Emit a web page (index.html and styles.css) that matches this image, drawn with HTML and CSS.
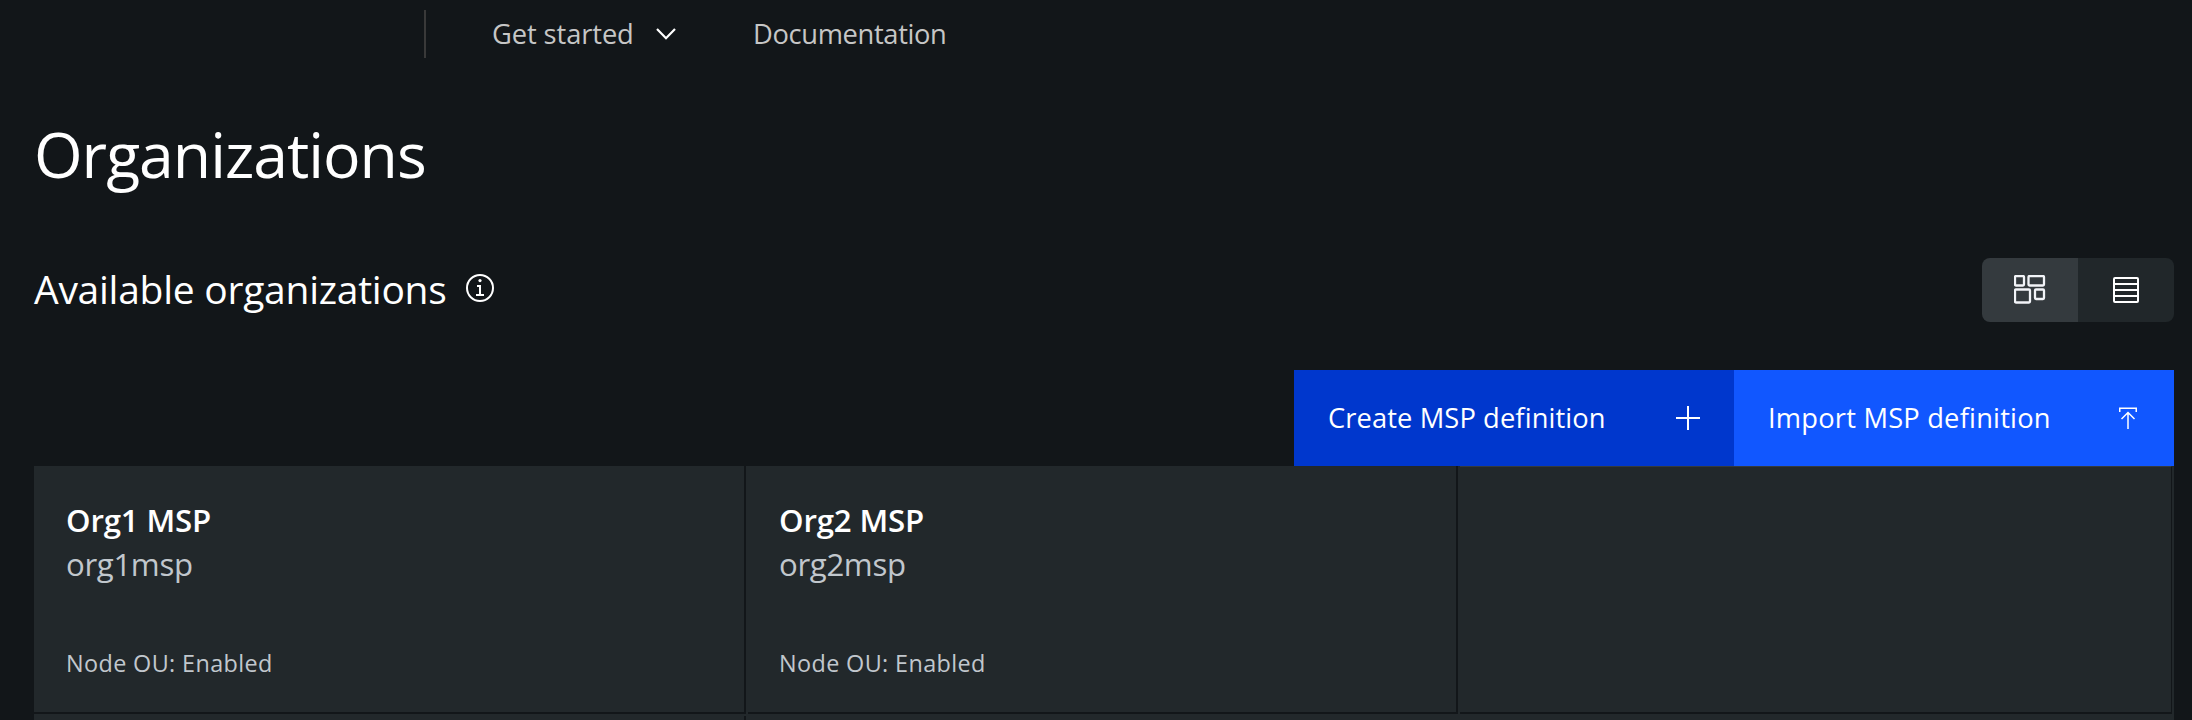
FILE: index.html
```html
<!DOCTYPE html>
<html lang="en">
<head>
<meta charset="utf-8">
<title>Organizations</title>
<link rel="stylesheet" href="styles.css">
</head>
<body>
<header class="topbar">
  <nav class="nav">
    <a class="nav-link started">Get started
      <svg class="chevron" width="20" height="12" viewBox="0 0 20 12"><path d="M1 1l9 9.2L19 1" fill="none" stroke="#fff" stroke-width="2.2"/></svg>
    </a>
    <a class="nav-link docs">Documentation</a>
  </nav>
</header>
<main class="page">
  <h1 class="title">Organizations</h1>
  <section class="heading-row">
    <h2 class="subtitle">Available organizations</h2>
    <svg class="info" width="28" height="28" viewBox="0 0 28 28"><circle cx="14" cy="14" r="13" fill="none" stroke="#fff" stroke-width="2"/><circle cx="14" cy="6.6" r="1.6" fill="#fff"/><path d="M11 12h3v9M10 21h8" fill="none" stroke="#fff" stroke-width="2"/></svg>
    <div class="toggle">
      <button class="toggle-item active" aria-label="Grid view">
        <svg width="32" height="30" viewBox="0 0 32 30" fill="none" stroke="#f2f4f8" stroke-width="2.3"><rect x="1" y="1" width="9" height="9.5" rx="1"/><rect x="14.5" y="1" width="15.5" height="9.5" rx="1"/><rect x="1" y="14.5" width="15" height="13" rx="1"/><rect x="21" y="14.5" width="9" height="9.5" rx="1"/></svg>
      </button>
      <button class="toggle-item" aria-label="List view">
        <svg width="26" height="26" viewBox="0 0 26 26" fill="none" stroke="#fff" stroke-width="2"><rect x="1" y="1" width="24" height="24" rx="1"/><path d="M1 7h24M1 13h24M1 19h24"/></svg>
      </button>
    </div>
  </section>
  <div class="actions">
    <button class="btn create"><span>Create MSP definition</span>
      <svg width="24" height="24" viewBox="0 0 24 24"><path d="M12 0v24M0 12h24" stroke="#fff" stroke-width="2"/></svg>
    </button>
    <button class="btn import"><span>Import MSP definition</span>
      <svg width="24" height="24" viewBox="0 0 24 24" fill="none" stroke="#fff" stroke-width="1.5"><path d="M3.75 6V2.25h16.5V6M12 23V6.5M5.5 13L12 6.5l6.5 6.5"/></svg>
    </button>
  </div>
  <div class="tiles">
    <article class="tile">
      <h3 class="name">Org1 MSP</h3>
      <p class="ident">org1msp</p>
      <p class="status">Node OU: Enabled</p>
    </article>
    <article class="tile">
      <h3 class="name">Org2 MSP</h3>
      <p class="ident">org2msp</p>
      <p class="status">Node OU: Enabled</p>
    </article>
    <article class="tile blank"></article>
    <div class="next-row"></div>
  </div>
</main>
</body>
</html>
```
FILE: styles.css
```css
* { box-sizing: border-box; margin: 0; padding: 0; }
body {
  height: 720px;
  overflow: hidden;
  background: #121619;
  color: #fff;
  font-family: "Open Sans", "Noto Sans", sans-serif;
}
button { border: 0; color: inherit; font: inherit; }
svg { display: block; flex: none; }

.topbar { height: 67px; padding: 10px 0 0 424px; }
.nav {
  display: flex;
  align-items: center;
  height: 48px;
  border-left: 2px solid #393939;
  padding-left: 66px;
}
.nav-link {
  display: flex;
  align-items: center;
  font-size: 27.3px;
  line-height: 48px;
  color: #c6c6c6;
  white-space: nowrap;
}
.started { width: 261px; letter-spacing: -0.1px; }
.docs { letter-spacing: -0.35px; }
.chevron { margin-left: 22px; }

.page { padding: 47px 18px 0 34px; }
.title {
  font-size: 62.5px;
  line-height: 80px;
  font-weight: 400;
  letter-spacing: -1px;
}
.heading-row { display: flex; height: 64px; margin-top: 64px; }
.subtitle {
  font-size: 39px;
  line-height: 61px;
  font-weight: 400;
  letter-spacing: -0.26px;
  width: 432px;
  white-space: nowrap;
}
.info { margin-top: 16px; }
.toggle {
  display: flex;
  margin-left: auto;
  border-radius: 8px;
  overflow: hidden;
}
.toggle-item {
  display: flex;
  align-items: center;
  justify-content: center;
  width: 96px;
  background: #21272a;
}
.toggle-item.active { background: #343a3e; }

.actions { display: flex; justify-content: flex-end; margin-top: 48px; }
.btn {
  display: flex;
  align-items: center;
  justify-content: space-between;
  width: 440px;
  height: 96px;
  padding: 0 34px;
  font-size: 27.3px;
  white-space: nowrap;
}
.btn span { padding-bottom: 2px; }
.create { background: #0037cd; letter-spacing: 0.1px; }
.import { background: #1157ff; letter-spacing: 0.2px; }

.tiles {
  display: grid;
  grid-template-columns: 712px 710px 712px;
  grid-template-rows: 248px 40px;
  gap: 2px;
  background: #22282b;
}
.tile {
  border-right: 2px solid #121619;
  border-bottom: 2px solid #121619;
  padding: 32px;
}
.tile + .tile { padding-left: 31px; }
.blank { border-right-width: 1px; border-top: 1px solid #343a3f; }
.next-row { border-right: 2px solid #121619; }
.name { font-size: 31.2px; line-height: 44px; font-weight: 600; letter-spacing: -0.15px; }
.ident { font-size: 31.2px; line-height: 44px; color: #c1c7cd; letter-spacing: -0.35px; }
.status {
  margin-top: 61px;
  font-size: 23.4px;
  line-height: 32px;
  color: #c1c7cd;
  letter-spacing: 0.38px;
}
```
